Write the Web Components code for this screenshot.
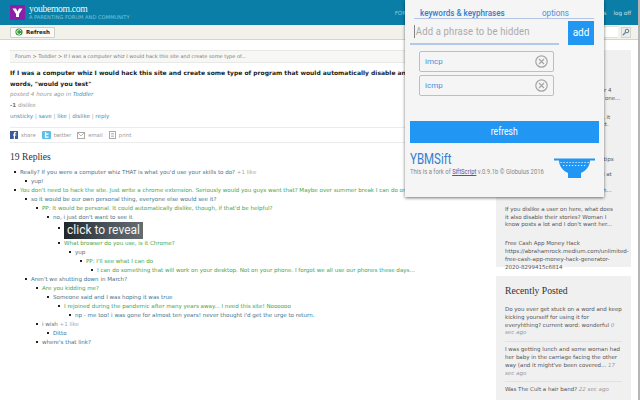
<!DOCTYPE html>
<html>
<head>
<meta charset="utf-8">
<title>youbemom</title>
<style>
  html, body { margin: 0; height: 400px; overflow: hidden; background: #fff; }
  body { font-family: "DejaVu Sans", sans-serif; }
</style>
</head>
<body>
<yb-app>
  <yb-header></yb-header>
  <yb-toolbar></yb-toolbar>
  <yb-layout>
    <yb-post slot="main"></yb-post>
    <yb-replies slot="main" count="19 Replies">
      <yb-reply text="Really? If you were a computer whiz THAT is what you'd use your skills to do?" like="+1 like" tone="blue">
        <yb-reply text="yup!" tone="blue"></yb-reply>
      </yb-reply>
      <yb-reply text="You don't need to hack the site. Just write a chrome extension. Seriously would you guys want that? Maybe over summer break I can do one." tone="green">
        <yb-reply text="so it would be our own personal thing, everyone else would see it?" tone="blue">
          <yb-reply text="PP: It would be personal. It could automatically dislike, though, if that'd be helpful?" tone="green">
            <yb-reply text="no, i just don't want to see it" tone="blue">
              <yb-reply tone="blue"><yb-reveal slot="body"></yb-reveal></yb-reply>
              <yb-reply text="What browser do you use, is it Chrome?" tone="green">
                <yb-reply text="yup" tone="blue">
                  <yb-reply text="PP: I'll see what I can do" tone="green">
                    <yb-reply text="I can do something that will work on your desktop. Not on your phone. I forgot we all use our phones these days..." tone="green"></yb-reply>
                  </yb-reply>
                </yb-reply>
              </yb-reply>
            </yb-reply>
          </yb-reply>
        </yb-reply>
        <yb-reply text="Aren't we shutting down in March?" tone="blue">
          <yb-reply text="Are you kidding me?" tone="green">
            <yb-reply text="Someone said and I was hoping it was true" tone="blue">
              <yb-reply text="I rejoined during the pandemic after many years away... I need this site! Noooooo" tone="green">
                <yb-reply text="np - me too! i was gone for almost ten years! never thought i'd get the urge to return." tone="blue"></yb-reply>
              </yb-reply>
            </yb-reply>
          </yb-reply>
          <yb-reply text="i wish" like="+1 like" tone="blue">
            <yb-reply text="Ditto" tone="blue"></yb-reply>
          </yb-reply>
          <yb-reply text="where's that link?" tone="blue"></yb-reply>
        </yb-reply>
      </yb-reply>
    </yb-replies>

    <yb-sidebox slot="side" style="height:217px">
      <yb-sideitem style="margin-top:28px">Anyone else's kid only talking in 3 or 4<br>word sentences? My boy is the only one...</yb-sideitem>
      <yb-sideitem>My daughter just started pre-K mini, it<br>seems like a lot more than I'd expect.</yb-sideitem>
      <yb-sideitem>Does anyone have tips for<br>the first weeks of school?<br>Any good recommendations or any tips from<br>people who have gone through it all at the<br>very first time around? Thanks much...</yb-sideitem>
      <yb-sideitem>If you dislike a user on here, what does<br>it also disable their stories? Woman I<br>know posts a lot and I don't want her...</yb-sideitem>
      <yb-sideitem>Free Cash App Money Hack<br>https://abrahamrock.medium.com/unlimited-<br>free-cash-app-money-hack-generator-<br>2020-8299415c6814</yb-sideitem>
    </yb-sidebox>
    <yb-sidebox slot="side" heading="Recently Posted">
      <yb-sideitem rule ago="0 sec ago">Do you ever get stuck on a word and keep kicking yourself for using it for everyhthing? current word: wonderful</yb-sideitem>
      <yb-sideitem rule ago="17 sec ago">I was getting lunch and some woman had her baby in the carriage facing the other way (and it might've been covered...</yb-sideitem>
      <yb-sideitem ago="22 sec ago">Was The Cult a hair band?</yb-sideitem>
    </yb-sidebox>
  </yb-layout>
  <yb-popup>
    <yb-chip>imcp</yb-chip>
    <yb-chip>icmp</yb-chip>
  </yb-popup>
</yb-app>

<script>
// small helper so every element is just a class + a template string
function shadow(el, html) {
  el.attachShadow({ mode: "open" });
  el.shadowRoot.innerHTML = html;
}

class YbApp extends HTMLElement {
  constructor() {
    super();
    shadow(this, `
      <style>
        :host { display: flex; flex-direction: column; position: relative; width: 640px; height: 400px; overflow: hidden; }
        .bar { position: absolute; top: 0; right: 0; bottom: 0; width: 2px; background: #b5b5b5; }
      </style>
      <slot></slot>
      <div class="bar"></div>
    `);
  }
}

class YbHeader extends HTMLElement {
  constructor() {
    super();
    shadow(this, `
      <style>
        :host { display: flex; align-items: center; height: 25px; padding: 0 9px 0 10px; box-sizing: border-box; background: #0a7ea6; color: #fff; flex: none; }
        .logo { width: 15px; height: 15px; background: #8b1fa9; margin-right: 4px; display: flex; align-items: center; justify-content: center; }
        .brand { flex: 1; }
        .name { font: 9.6px/10px "Liberation Serif", serif; letter-spacing: -.3px; color: #f2fafd; }
        .tag { font: 5.1px/7px "DejaVu Sans", sans-serif; color: #7fc4dc; }
        nav { display: flex; font: 5.6px "DejaVu Sans", sans-serif; color: #cbe8f2; gap: 7px; }
        nav span:first-child { margin-right: 162px; color: #8fc9df; }
      </style>
      <div class="logo">
        <svg width="11" height="11" viewBox="0 0 11 11"><path d="M0.5 1.5H4L5.5 4.5L7 1.5H10.5L7 7V10H4V7Z" fill="#fff"/></svg>
      </div>
      <div class="brand">
        <div class="name">youbemom.com</div>
        <div class="tag">A PARENTING FORUM AND COMMUNITY</div>
      </div>
      <nav><span>FORUM</span><span>settings</span><span>log off</span></nav>
    `);
  }
}

class YbToolbar extends HTMLElement {
  constructor() {
    super();
    shadow(this, `
      <style>
        :host { display: flex; align-items: center; height: 15px; padding: 0 9px 0 10px; box-sizing: border-box; background: #f2f2ea; border-bottom: 1px solid #d5d5d0; flex: none; }
        .btn { display: flex; align-items: center; gap: 3px; width: 45px; height: 11px; box-sizing: border-box; padding: 0 0 0 4px; background: #fafafa; border: 1px solid #d0d0c8; border-radius: 1px; font: bold 5.5px "DejaVu Sans", sans-serif; color: #222; }
        .grow { flex: 1; }
        .search { width: 50px; height: 10px; background: #fff; border: 1px solid #e2e2dc; border-right: 0; }
        .go { width: 10px; height: 11px; margin-left: 3px; display: flex; align-items: center; justify-content: center; background: #ececec; border: 1px solid #d5d5d0; box-sizing: border-box; }
      </style>
      <div class="btn">
        <svg width="8" height="8" viewBox="0 0 8 8"><circle cx="4" cy="4" r="3.6" fill="#3d9a3d"/><path d="M6 3A2.2 2.2 0 1 0 6 5" fill="none" stroke="#e6f5df" stroke-width="1"/></svg>
        Refresh
      </div>
      <div class="grow"></div>
      <div class="search"></div>
      <div class="go">
        <svg width="8" height="8" viewBox="0 0 8 8"><circle cx="5" cy="3" r="1.8" fill="none" stroke="#5c7c8c"/><path d="M3.6 4.4L1 7" stroke="#5c7c8c" stroke-width="1.3"/></svg>
      </div>
    `);
  }
}

class YbLayout extends HTMLElement {
  constructor() {
    super();
    shadow(this, `
      <style>
        :host { display: grid; grid-template-columns: 476px 135px; column-gap: 10px; padding: 10px 9px 0 10px; flex: 1; min-height: 0; }
        .side { display: flex; flex-direction: column; gap: 9px; }
        .main { min-width: 0; }
      </style>
      <div class="main"><slot name="main"></slot></div>
      <div class="side"><slot name="side"></slot></div>
    `);
  }
}

class YbPost extends HTMLElement {
  constructor() {
    super();
    shadow(this, `
      <style>
        :host { display: block; font: 5.6px/11px "DejaVu Sans", sans-serif; color: #999; }
        a { color: #3f93b5; text-decoration: none; }
        .crumb { height: 11px; line-height: 11px; padding: 0 5px; background: #f7f7f5; border: 1px solid #e8e8e6; border-width: 1px 0; color: #777; margin-bottom: 4px; white-space: nowrap; font-size: 5px; }
        h1 { margin: 0; font: bold 6px/11px "DejaVu Sans", sans-serif; color: #1c1c1c; }
        .actions { color: #aaa; }
        b { color: #777; }
        .share { display: flex; align-items: center; height: 14px; margin-top: 5px; border: 1px solid #ececec; border-width: 1px 0; color: #999; font-size: 5.3px; }
        .share svg { flex: none; margin-right: 3px; }
        .share span { margin-right: 6px; }
      </style>
      <div class="crumb">Forum &gt; Toddler &gt; If I was a computer whiz I would hack this site and create some type of...</div>
      <h1>If I was a computer whiz I would hack this site and create some type of program that would automatically disable any post with<br>words, "would you test"</h1>
      <div><i>posted 4 hours ago in</i> <a href="#"><i>Toddler</i></a></div>
      <div><b>-1</b> dislike</div>
      <div class="actions"><a href="#">unsticky</a> | <a href="#">save</a> | <a href="#">like</a> | <a href="#">dislike</a> | <a href="#">reply</a></div>
      <div class="share">
        <svg width="8" height="8" viewBox="0 0 8 8"><rect width="8" height="8" fill="#3b5a98"/><path d="M5 8V4.6H6.2V3.4H5V2.7C5 2.3 5.2 2.2 5.5 2.2H6.2V1H5.2C4.2 1 3.8 1.7 3.8 2.5V3.4H3V4.6H3.8V8Z" fill="#fff"/></svg>
        <span>share</span>
        <svg width="9" height="8" viewBox="0 0 9 8"><rect width="9" height="8" rx="1" fill="#5cc0e6"/><path d="M3.5 1V6.2H6.5M3.5 3.2H6.5" fill="none" stroke="#fff" stroke-width="1.2"/></svg>
        <span>twitter</span>
        <svg width="8" height="7" viewBox="0 0 8 7"><rect x=".5" y=".5" width="7" height="6" fill="none" stroke="#aaa"/><path d="M.5 .5L4 4L7.5 .5" fill="none" stroke="#aaa" stroke-width=".8"/></svg>
        <span>email</span>
        <svg width="7" height="8" viewBox="0 0 7 8"><rect x=".5" y=".5" width="6" height="7" fill="none" stroke="#aaa"/><path d="M2 2.5H5M2 4H5M2 5.5H5" stroke="#aaa" stroke-width=".7"/></svg>
        <span>print</span>
      </div>
    `);
  }
}

class YbReplies extends HTMLElement {
  constructor() {
    super();
    shadow(this, `
      <style>
        :host { display: block; white-space: nowrap; }
        h2 { margin: 7px 0 5px; font: normal 9.6px/13px "Liberation Serif", serif; color: #333; }
        .list { margin-left: -1px; }
      </style>
      <h2>${this.getAttribute("count")}</h2>
      <div class="list"><slot></slot></div>
    `);
  }
}

class YbReply extends HTMLElement {
  constructor() {
    super();
    const text = this.getAttribute("text") || "";
    const like = this.getAttribute("like");
    shadow(this, `
      <style>
        :host { display: block; padding-left: 11px; font: 5.55px/9px "DejaVu Sans", sans-serif; }
        :host([tone=green]) .t { color: #3fa64a; }
        :host([tone=blue]) .t { color: #44738c; }
        .t:empty { display: none; }
        .row { position: relative; }
        .row::before { content: ""; position: absolute; left: -6px; top: 3px; width: 2px; height: 2px; background: #222; }
        :host(:not([text])) .row::before { top: 5px; }
        .like { color: #aaa; }
      </style>
      <div class="row"><span class="t">${text}</span>${like ? ` <span class="like">${like}</span>` : ""}<slot name="body"></slot></div>
      <slot></slot>
    `);
  }
}

class YbReveal extends HTMLElement {
  constructor() {
    super();
    shadow(this, `
      <style>
        :host { display: flex; align-items: center; justify-content: center; width: 79px; height: 17px; color: #f4f4f4; background: linear-gradient(90deg, #20272c, #4a545b 55%, #666b70); font: 12px/17px Roboto, sans-serif; }
      </style>
      click to reveal
    `);
  }
}

class YbSidebox extends HTMLElement {
  constructor() {
    super();
    const h = this.getAttribute("heading");
    shadow(this, `
      <style>
        :host { display: block; box-sizing: border-box; padding: 9px 9px 0; background: #f0f0f0; flex: none; border-radius: 1px; white-space: normal; }
        h3 { margin: 0 0 9px; font: normal 9.7px/12px "Liberation Serif", serif; color: #333; }
      </style>
      ${h ? `<h3>${h}</h3>` : ""}
      <slot></slot>
    `);
  }
}

class YbSideitem extends HTMLElement {
  constructor() {
    super();
    const ago = this.getAttribute("ago");
    shadow(this, `
      <style>
        :host { display: block; font: 5.5px/7.8px "DejaVu Sans", sans-serif; color: #555; margin-bottom: 11px; }
        :host([rule]) { padding-bottom: 4px; margin-bottom: 4px; border-bottom: 1px solid #e2e2e2; }
        i { color: #999; }
      </style>
      <slot></slot>${ago ? ` <i>${ago}</i>` : ""}
    `);
  }
}

class YbPopup extends HTMLElement {
  constructor() {
    super();
    shadow(this, `
      <style>
        :host { position: absolute; left: 405px; top: 0; width: 199px; height: 197px; box-sizing: border-box; padding: 0 5px; background: #f5f5f5; box-shadow: 0 1px 3px rgba(0,0,0,.55); font-family: Roboto, sans-serif; }
        .sq { display: inline-block; transform-origin: 0 50%; white-space: nowrap; }
        .tabs { display: flex; height: 19px; margin: 0 5px 0 4px; box-sizing: border-box; padding: 7px 0 0 6px; border-bottom: 1px solid #b4c6e6; font: 500 9.5px/11px Roboto, sans-serif; color: #2e7fd0; }
        .tabs .sq { transform: scaleX(.85); }
        .tabs .a { width: 122px; }
        .tabs .b { font-weight: 400; color: #4a90d9; }
        .entry { display: flex; margin: 2px 5px 0 0; }
        .input { flex: 1; height: 24px; margin-right: 9px; box-sizing: border-box; padding-left: 4px; border-bottom: 2px solid #b4c9ea; font: 10.5px/22px Roboto, sans-serif; letter-spacing: .2px; color: #aaa; }
        .input .sq { transform: scaleX(.9); border-left: 1px solid #777; padding-left: 1px; line-height: 13px; }
        .add { width: 26px; height: 24px; background: #2196f3; color: #fff; font: 400 10px/24px Roboto, sans-serif; text-align: center; }
        .chips { display: flex; flex-direction: column; gap: 3px; margin: 6px 0 0 9px; width: 135px; }
        .refresh { height: 22px; margin-top: 25px; background: #2196f3; color: #fff; font: 11px/22px Roboto, sans-serif; text-align: center; }
        .refresh .sq { transform: scaleX(.78); transform-origin: 50% 50%; }
        .foot { display: flex; justify-content: space-between; margin-top: 8px; }
        h4 { margin: 0; font: 400 14px/16px Roboto, sans-serif; color: #2f80cf; }
        h4 .sq { transform: scaleX(.82); }
        p { margin: 0; font: 7.3px/10px Roboto, sans-serif; color: #888; white-space: nowrap; }
        p .sq { transform: scaleX(.81); }
        a { color: #6a4a9c; }
        svg { margin: 7px 4px 0 0; flex: none; }
      </style>
      <div class="tabs"><span class="sq a">keywords &amp; keyphrases</span><span class="sq b">options</span></div>
      <div class="entry">
        <div class="input"><span class="sq">Add a phrase to be hidden</span></div>
        <div class="add">add</div>
      </div>
      <div class="chips"><slot></slot></div>
      <div class="refresh"><span class="sq">refresh</span></div>
      <div class="foot">
        <div style="width:130px">
          <h4><span class="sq">YBMSift</span></h4>
          <p><span class="sq">This is a fork of <a href="#">SiftScript</a> v.0.9.1b &copy; Globulus 2016</span></p>
        </div>
        <svg width="41" height="20" viewBox="0 0 41 20">
          <path d="M0 0.5H41V2.5H36C36 8 32 13 27 15V20H14V15C9 13 5 8 5 2.5H0Z" fill="#2196f3"/>
          <g fill="#e6f2fd">
            <path d="M6.5 4h1.2v1H6.5zM9.5 4h1.2v1H9.5zM12.5 4h1.2v1H12.5zM15.5 4h1.2v1H15.5zM18.5 4h1.2v1H18.5zM21.5 4h1.2v1H21.5zM24.5 4h1.2v1H24.5zM27.5 4h1.2v1H27.5zM30.5 4h1.2v1H30.5zM33.5 4h1.2v1H33.5z"/>
            <path d="M9 7h1.2v1H9zM12 7h1.2v1H12zM15 7h1.2v1H15zM18 7h1.2v1H18zM21 7h1.2v1H21zM24 7h1.2v1H24zM27 7h1.2v1H27zM30 7h1.2v1H30z"/>
          </g>
        </svg>
      </div>
    `);
  }
}

class YbChip extends HTMLElement {
  constructor() {
    super();
    shadow(this, `
      <style>
        :host { display: flex; align-items: center; justify-content: space-between; height: 21px; box-sizing: border-box; padding: 0 5px 0 5px; border: 1px solid #afc1e2; border-radius: 2px; font: 8px Roboto, sans-serif; color: #4a90d9; }
      </style>
      <slot></slot>
      <svg width="13" height="13" viewBox="0 0 13 13"><circle cx="6.5" cy="6.5" r="5.7" fill="none" stroke="#a5a5a5" stroke-width="1.2"/><path d="M4 4L9 9M9 4L4 9" stroke="#a5a5a5" stroke-width="1.2"/></svg>
    `);
  }
}

customElements.define("yb-app", YbApp);
customElements.define("yb-header", YbHeader);
customElements.define("yb-toolbar", YbToolbar);
customElements.define("yb-layout", YbLayout);
customElements.define("yb-post", YbPost);
customElements.define("yb-replies", YbReplies);
customElements.define("yb-reply", YbReply);
customElements.define("yb-reveal", YbReveal);
customElements.define("yb-sidebox", YbSidebox);
customElements.define("yb-sideitem", YbSideitem);
customElements.define("yb-popup", YbPopup);
customElements.define("yb-chip", YbChip);
</script>
</body>
</html>
